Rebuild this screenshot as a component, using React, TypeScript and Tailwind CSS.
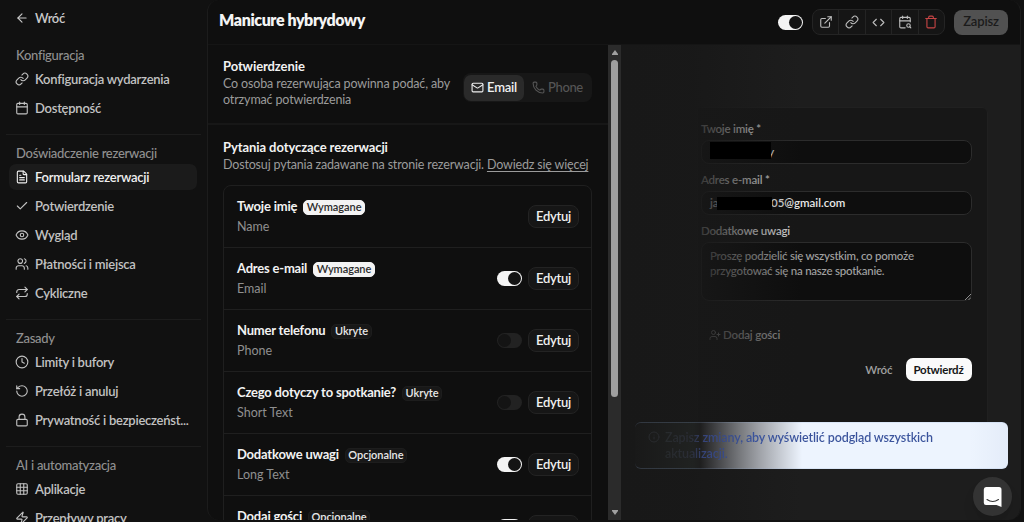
import type { ReactNode } from 'react';
import {
  ArrowLeft, Link, Calendar, FileText, Check, Eye, Users, Repeat, Clock, RotateCcw, Lock,
  Grid3x3, Zap, ExternalLink, Code, CalendarSearch, Trash, Mail, Phone, UserPlus, Info,
} from 'lucide-react';
import type { LucideIcon } from 'lucide-react';

type Item = { icon: LucideIcon; label: string; active?: boolean };
type Section = { title: string; items: Item[] };

const sections: Section[] = [
  {
    title: 'Konfiguracja',
    items: [
      { icon: Link, label: 'Konfiguracja wydarzenia' },
      { icon: Calendar, label: 'Dostępność' },
    ],
  },
  {
    title: 'Doświadczenie rezerwacji',
    items: [
      { icon: FileText, label: 'Formularz rezerwacji', active: true },
      { icon: Check, label: 'Potwierdzenie' },
      { icon: Eye, label: 'Wygląd' },
      { icon: Users, label: 'Płatności i miejsca' },
      { icon: Repeat, label: 'Cykliczne' },
    ],
  },
  {
    title: 'Zasady',
    items: [
      { icon: Clock, label: 'Limity i bufory' },
      { icon: RotateCcw, label: 'Przełóż i anuluj' },
      { icon: Lock, label: 'Prywatność i bezpieczeńst...' },
    ],
  },
  {
    title: 'AI i automatyzacja',
    items: [
      { icon: Grid3x3, label: 'Aplikacje' },
      { icon: Zap, label: 'Przepływy pracy' },
    ],
  },
];

type Question = { name: string; badge: string; type: string; toggle?: 'on' | 'off' };

const questions: Question[] = [
  { name: 'Twoje imię', badge: 'Wymagane', type: 'Name' },
  { name: 'Adres e-mail', badge: 'Wymagane', type: 'Email', toggle: 'on' },
  { name: 'Numer telefonu', badge: 'Ukryte', type: 'Phone', toggle: 'off' },
  { name: 'Czego dotyczy to spotkanie?', badge: 'Ukryte', type: 'Short Text', toggle: 'off' },
  { name: 'Dodatkowe uwagi', badge: 'Opcjonalne', type: 'Long Text', toggle: 'on' },
  { name: 'Dodaj gości', badge: 'Opcjonalne', type: 'Multiple Emails', toggle: 'on' },
];

function Toggle({ on }: { on: boolean }) {
  return (
    <span
      className={
        on
          ? 'flex h-[15px] w-[25px] shrink-0 items-center justify-end rounded-full bg-[#f4f4f4] p-px'
          : 'flex h-[15px] w-[25px] shrink-0 items-center justify-start rounded-full bg-[#222222] p-px'
      }
    >
      <span className="size-[13px] rounded-full bg-[#141414]" />
    </span>
  );
}

function Sidebar() {
  return (
    <aside className="flex h-full w-[207px] shrink-0 flex-col overflow-hidden pt-[5px]">
      <div className="ml-[15px] flex h-[26px] shrink-0 items-center gap-[6px] text-[#c9c9c9]">
        <ArrowLeft size={14} strokeWidth={1.9} />
        <span className="pt-px text-[13px] font-semibold tracking-[-0.35px]">Wróć</span>
      </div>
      <div className="h-[5px] shrink-0" />
      {sections.map((s, i) => (
        <div
          key={s.title}
          className={
            i === 0
              ? 'mx-[6px] mb-[13px] shrink-0 pt-[11px]'
              : 'mx-[6px] mb-[13px] shrink-0 border-t border-[#1d1d1d] pt-[10px]'
          }
        >
          <h3 className="mb-[3px] ml-[10px] h-4 text-[13px] leading-4 font-medium tracking-[-0.28px] text-[#909090]">{s.title}</h3>
          <div className="mx-[3px] flex flex-col gap-[3px]">
            {s.items.map(({ icon: Icon, label, active }) => (
              <div
                key={label}
                className={
                  active
                    ? 'flex h-[26px] w-[188px] items-center gap-[6px] rounded-[7px] bg-[#1b1b1b] pl-[6px] text-[#f0f0f0]'
                    : 'flex h-[26px] items-center gap-[6px] pl-[6px] text-[#c2c2c2]'
                }
              >
                <Icon size={14} strokeWidth={1.9} />
                <span className="text-[13px] leading-4 font-semibold tracking-[-0.25px] whitespace-nowrap">{label}</span>
              </div>
            ))}
          </div>
        </div>
      ))}
    </aside>
  );
}

function Header() {
  const cell = 'flex h-full flex-1 items-center justify-center border-r border-[#242424]';
  return (
    <header className="flex h-[45px] shrink-0 items-center border-b border-[#151515] pr-[12px] pl-[11px]">
      <h1 className="mr-auto pb-[4px] text-[16px] font-extrabold tracking-[-0.4px] text-[#f4f4f4]">Manicure hybrydowy</h1>
      <Toggle on />
      <div className="ml-[9px] flex h-[26px] w-[133px] rounded-[8px] border border-[#242424] bg-[#151515] text-[#bdbdbd]">
        <span className={cell}><ExternalLink size={14} strokeWidth={1.9} /></span>
        <span className={cell}><Link size={14} strokeWidth={1.9} /></span>
        <span className={cell}><Code size={13} /></span>
        <span className={cell}><CalendarSearch size={14} strokeWidth={1.9} /></span>
        <span className="flex h-full flex-1 items-center justify-center text-[#c74545]"><Trash size={14} strokeWidth={1.9} /></span>
      </div>
      <button className="ml-[9px] h-[25px] w-[54px] rounded-[8px] bg-[#515151] text-[13px] font-semibold tracking-[-0.15px] text-[#1b1b1b]">
        Zapisz
      </button>
    </header>
  );
}

function Badge({ children }: { children: string }) {
  const base = 'flex h-[15px] items-center rounded-[5px] border px-[2.5px] text-[11px] font-semibold tracking-[-0.05px] ';
  return (
    <span
      className={
        children === 'Wymagane'
          ? base + 'border-[#f3f3f3] bg-[#f3f3f3] text-[#2c2c2c]'
          : base + 'border-[#1d1d1d] bg-[#181818] text-[#e8e8e8]'
      }
    >
      {children}
    </span>
  );
}

function Settings() {
  return (
    <section className="flex h-full w-[400px] shrink-0 flex-col overflow-hidden">
      <div className="flex h-[80px] shrink-0 items-start border-b-2 border-[#171717] pr-[16px] pl-[15px]">
        <div className="w-[240px] pt-[12px]">
          <h2 className="mb-px text-[13px] leading-[18px] font-bold tracking-[-0.1px] text-[#f2f2f2]">Potwierdzenie</h2>
          <p className="text-[12.5px] leading-4 tracking-[-0.14px] whitespace-nowrap text-[#9b9b9b]">
            Co osoba rezerwująca powinna podać, aby<br />otrzymać potwierdzenia
          </p>
        </div>
        <div className="mt-[28px] flex h-[29px] w-[129px] items-center rounded-[8px] bg-[#171717] p-px text-[13px] font-semibold tracking-[-0.25px]">
          <span className="flex h-[26px] w-[60px] items-center justify-center gap-[3px] rounded-[7px] bg-[#2a2a2a] text-[#f0f0f0]">
            <Mail size={13} />Email
          </span>
          <span className="flex flex-1 items-center gap-[3px] pl-[8px] font-medium tracking-[-0.35px] text-[#555555]">
            <Phone size={13} />Phone
          </span>
        </div>
      </div>
      <div className="pt-[14px] pr-[16px] pl-[15px]">
        <h2 className="text-[13px] leading-[17px] font-bold tracking-[-0.08px] text-[#f2f2f2]">Pytania dotyczące rezerwacji</h2>
        <p className="text-[12.5px] leading-[17px] tracking-[-0.17px] whitespace-nowrap text-[#9b9b9b]">
          Dostosuj pytania zadawane na stronie rezerwacji.{' '}
          <span className="underline underline-offset-2">Dowiedz się więcej</span>
        </p>
        <div className="mt-[12px] rounded-[8px] border border-[#1f1f1f]">
          {questions.map((q, i) => (
            <div
              key={q.name}
              className={
                i === 0
                  ? 'flex h-[61px] items-center pr-3 pl-[13px]'
                  : 'flex h-[62px] items-center border-t border-[#1f1f1f] pr-3 pl-[13px]'
              }
            >
              <div className="mr-auto">
                <div className="flex h-[19px] items-center gap-[6px]">
                  <span className="text-[13px] font-bold tracking-[-0.2px] text-[#f2f2f2]">{q.name}</span>
                  <Badge>{q.badge}</Badge>
                </div>
                <div className="mt-px mb-px text-[12.5px] leading-[17px] text-[#8f8f8f]">{q.type}</div>
              </div>
              {q.toggle && <Toggle on={q.toggle === 'on'} />}
              <button className="ml-[6px] h-[23px] w-[51px] rounded-[8px] border border-[#232323] bg-[#161616] text-[13px] font-semibold tracking-[-0.25px] text-[#f0f0f0]">
                Edytuj
              </button>
            </div>
          ))}
        </div>
      </div>
    </section>
  );
}

function Scrollbar() {
  return (
    <div className="flex h-full w-[13px] shrink-0 flex-col items-center bg-[#2b2b2b]">
      <svg className="mt-[5px] h-[5px] w-[6px]" viewBox="0 0 6 5"><path d="M3 0L6 4V5H0V4Z" fill="#a0a0a0" /></svg>
      <div className="mt-[5px] h-[337px] w-[7px] rounded-full bg-[#9f9f9f]" />
      <svg className="mt-auto mb-[5px] h-[5px] w-[6px]" viewBox="0 0 6 5"><path d="M3 5L6 1V0H0V1Z" fill="#a0a0a0" /></svg>
    </div>
  );
}

function Field({ label, children }: { label: ReactNode; children: ReactNode }) {
  return (
    <div className="mb-[8px]">
      <div className="mb-[3px] h-4 text-[11.5px] leading-4 font-semibold tracking-[-0.2px] text-[#d8d8d8]">{label}</div>
      {children}
    </div>
  );
}

function Preview() {
  return (
    <section className="relative h-full flex-1 overflow-hidden bg-[#1d1d1d]">
      <div className="mt-[62px] ml-[76px] h-[330px] w-[291px] rounded-tr-[6px] border border-[#202020] bg-[#171717] pt-[13px] pr-[15.5px] pl-[3px]">
        <Field label="Twoje imię *">
          <div className="flex h-[24px] items-center rounded-[8px] border border-[#2c2c2c] bg-[#0e0e0e] pl-[66px] text-[12px] text-[#e8e8e8]">y</div>
        </Field>
        <Field label="Adres e-mail *">
          <div className="flex h-[24px] items-center rounded-[8px] border border-[#2c2c2c] bg-[#0e0e0e] pl-[8px] text-[11.5px] font-semibold text-[#e8e8e8]">
            <span className="w-[61px]">ja</span>05@gmail.com
          </div>
        </Field>
        <Field label="Dodatkowe uwagi">
          <div className="relative h-[59px] rounded-[8px] border border-[#2c2c2c] bg-[#0e0e0e] pt-[5px] pl-[8px] text-[11.5px] leading-[15px] font-medium tracking-[-0.24px] whitespace-nowrap text-[#a3a3a3]">
            Proszę podzielić się wszystkim, co pomoże<br />przygotować się na nasze spotkanie.
            <svg className="absolute right-0 bottom-0 size-[6px]" viewBox="0 0 6 6" stroke="#b0b0b0" strokeWidth=".8"><path d="M0 6L6 0M3.5 6L6 3.5" /></svg>
          </div>
        </Field>
        <div className="mt-[26px] flex h-4 items-center gap-[2px] pl-[8px] text-[11.5px] font-semibold tracking-[-0.18px] text-[#8f8f8f]">
          <UserPlus size={12} />Dodaj gości
        </div>
        <div className="mt-[15px] flex items-center justify-end">
          <span className="mr-[13px] text-[11.5px] font-semibold tracking-[-0.1px] text-[#a0a0a0]">Wróć</span>
          <button className="h-[23px] w-[66px] rounded-[7px] bg-[#fafafa] text-[11.5px] font-bold tracking-[-0.2px] text-[#161616]">Potwierdź</button>
        </div>
      </div>
      <div className="absolute inset-0 bg-[linear-gradient(90deg,#181818_0px,#181818e6_70px,#181818c0_90px,#18181800_180px)]" />
      <div className="absolute top-[97px] left-[89px] h-[17px] w-[61px] bg-black" />
      <div className="absolute top-[152px] left-[96px] h-[13px] w-[55px] bg-black" />
      <div className="absolute top-[377px] left-[14px] flex h-[47px] w-[373px] gap-[5px] rounded-[6px] border-y border-[#8fb0dc33] bg-[linear-gradient(90deg,#191919_0px,#202221_58px,#1e1e1e_65px,#4a4b4e_85px,#77797d_105px,#a0a3a9_125px,#cbd0d8_148px,#edf4fe_167px,#edf4fe_90%,#e4ecf9_100%)] pt-[7px] pl-[13px] text-[12.5px] leading-4 font-semibold tracking-[-0.11px]">
        <Info size={12} className="mt-px shrink-0 text-[#292b2e]" />
        <p className="h-8 bg-[linear-gradient(90deg,#272a2c_0px,#2a2d36_26px,#36457c_40px,#3a539c_90px)] bg-clip-text whitespace-nowrap text-transparent">
          Zapisz zmiany, aby wyświetlić podgląd wszystkich<br />aktualizacji.
        </p>
      </div>
      <div className="absolute top-[432px] left-[352px] flex size-[39px] items-center justify-center rounded-full bg-[#333333] shadow-lg">
        <svg className="size-[20px]" viewBox="0 0 20 20">
          <path d="M3 0H16Q18.5 0 18.5 2.5V20L13.5 18H3Q.8 18 .8 15.8V2.5Q.8 0 3 0Z" fill="#fff" />
          <path d="M4 12.5Q9.7 16.5 15.5 12.5" fill="none" stroke="#333" strokeWidth="1.1" strokeLinecap="round" />
        </svg>
      </div>
    </section>
  );
}

export default function App() {
  return (
    <div className="flex h-[522px] w-[1024px] overflow-hidden bg-[#111111] font-['Lato','Noto_Sans',sans-serif]">
      <Sidebar />
      <main className="flex h-[520px] w-[814px] flex-col overflow-hidden rounded-[12px] border-x border-[#1c1c1c] bg-[#0f0f0f]">
        <Header />
        <div className="flex min-h-0 flex-1">
          <Settings />
          <Scrollbar />
          <Preview />
        </div>
      </main>
    </div>
  );
}
